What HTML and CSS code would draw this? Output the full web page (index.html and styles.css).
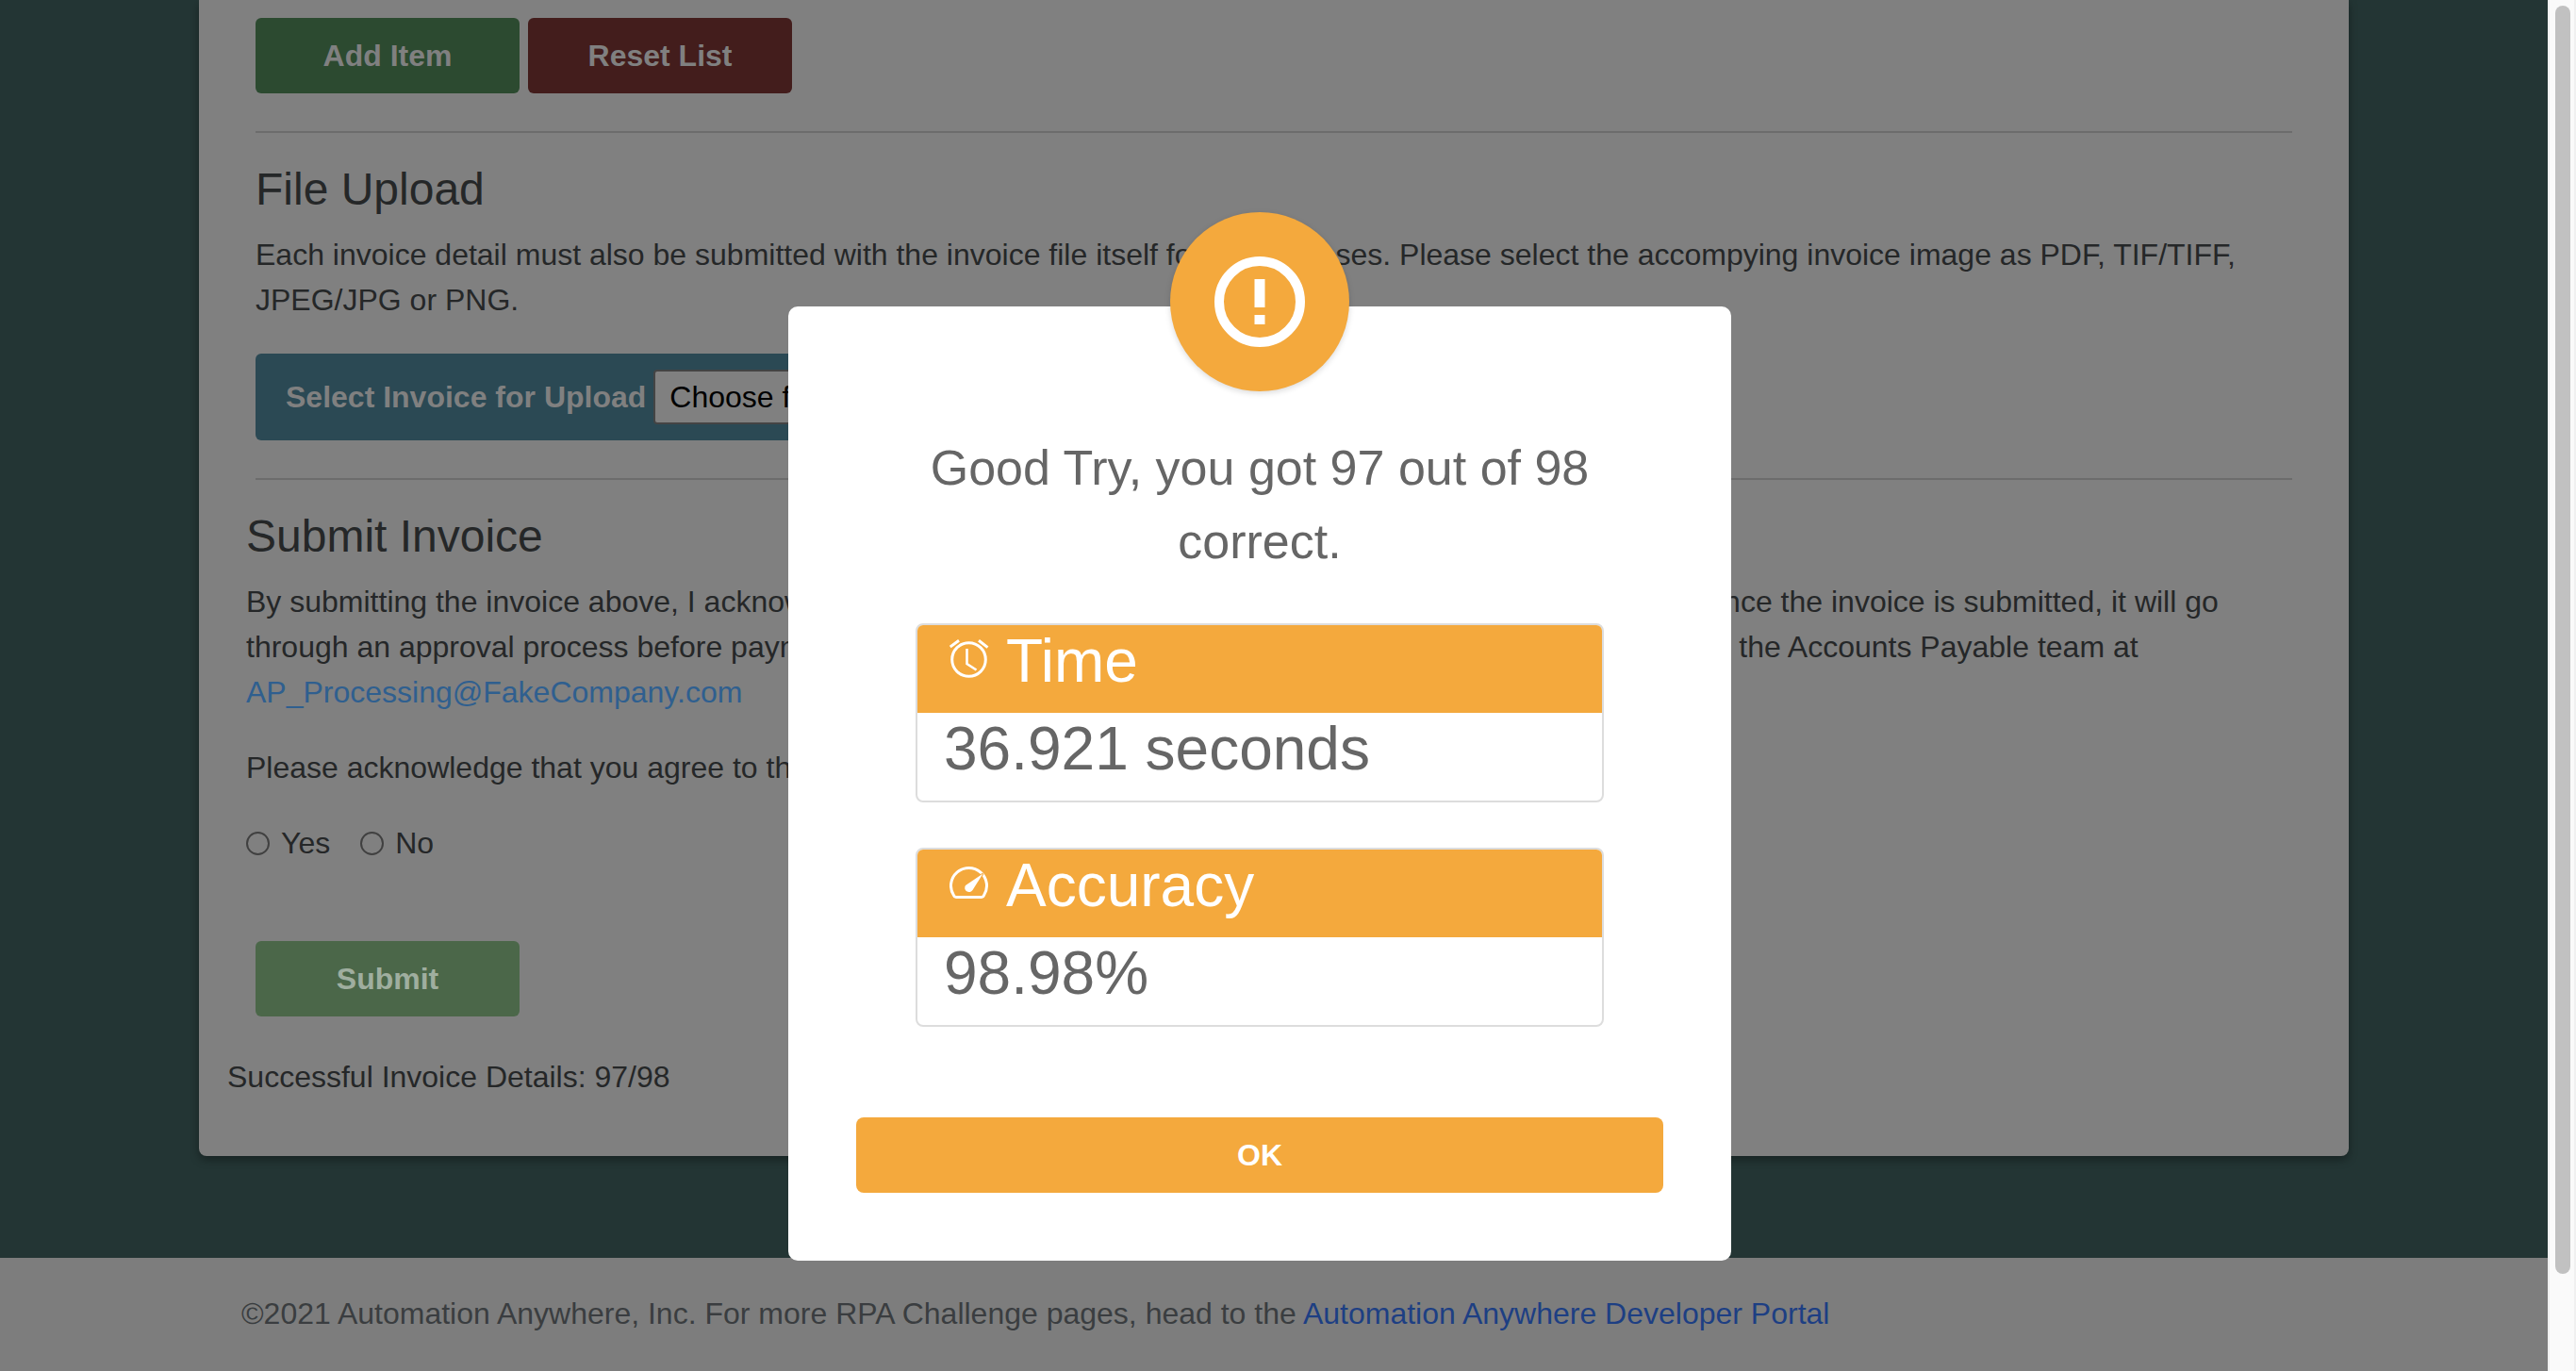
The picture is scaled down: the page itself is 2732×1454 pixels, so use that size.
FILE: index.html
```html
<!DOCTYPE html>
<html lang="en">
<head>
<meta charset="utf-8">
<title>Invoice Entry</title>
<link rel="stylesheet" href="styles.css">
</head>
<body>
<div class="app">
  <div class="page">
    <main class="main">
      <div class="card">
        <div class="block">
          <div class="btn-row">
            <button class="btn btn-add">Add Item</button>
            <button class="btn btn-reset">Reset List</button>
          </div>
          <hr class="rule rule-first">
          <h3 class="heading heading-upload">File Upload</h3>
          <p class="text">Each invoice detail must also be submitted with the invoice file itself for tax purposes. Please select the accompying invoice image as PDF, TIF/TIFF, JPEG/JPG or PNG.</p>
          <div class="upload">
            <span class="upload-label">Select Invoice for Upload</span>
            <button class="file-btn">Choose file</button>
          </div>
          <hr class="rule rule-second">
        </div>
        <div class="block-submit">
          <h3 class="heading heading-submit">Submit Invoice</h3>
          <p class="text text-terms">By submitting the invoice above, I acknowledge that all the details are accurate to the best of my knowledge. Once the invoice is submitted, it will go through an approval process before payment can be released to you. If you have any questions, please contact the Accounts Payable team at <a class="mail" href="#">AP_Processing@FakeCompany.com</a></p>
          <p class="text text-ack">Please acknowledge that you agree to the terms above.</p>
          <div class="radios">
            <label class="radio-item"><input class="radio" type="radio" name="ack">Yes</label>
            <label class="radio-item"><input class="radio" type="radio" name="ack">No</label>
          </div>
          <button class="btn btn-submit">Submit</button>
        </div>
        <p class="text result">Successful Invoice Details: 97/98</p>
      </div>
    </main>
    <footer class="footer">©2021 Automation Anywhere, Inc. For more RPA Challenge pages, head to the <a class="footer-link" href="#">Automation Anywhere Developer Portal</a></footer>

    <div class="modal">
      <div class="modal-icon">
        <svg class="alert-svg" width="96" height="96" viewBox="0 0 96 96">
          <circle cx="48" cy="48" r="43" fill="none" stroke="#fff" stroke-width="10"/>
          <rect x="42.5" y="24" width="11" height="30" fill="#fff"/>
          <rect x="42.5" y="62" width="11" height="10" fill="#fff"/>
        </svg>
      </div>
      <h2 class="modal-title">Good Try, you got 97 out of 98 correct.</h2>
      <section class="stat stat-first">
        <div class="stat-head">
          <svg class="stat-icon" width="42" height="42" viewBox="0 0 42 42" fill="none" stroke="#fff" stroke-width="3">
            <circle cx="20.5" cy="22.5" r="17.8"/>
            <path d="M0.7 9 L10 2.2 M31 2.2 L40.5 9.6"/>
            <path d="M18.5 11 V27 L28.5 33.5" stroke-width="2.6" stroke-linejoin="miter"/>
          </svg>
          <span>Time</span>
        </div>
        <div class="stat-body">36.921 seconds</div>
      </section>
      <section class="stat">
        <div class="stat-head">
          <svg class="stat-icon" width="42" height="42" viewBox="0 0 42 42" fill="none" stroke="#fff" stroke-width="3">
            <path d="M7 36.5 H34 A2.5 2.5 0 0 0 36.4 34.8 A19 19 0 1 0 4.6 34.8 A2.5 2.5 0 0 0 7 36.5 Z"/>
            <path d="M35.5 11.5 L24.5 29 A4.2 4.2 0 0 1 17 24 Z" fill="#fff" stroke="#f4a93d" stroke-width="2" paint-order="stroke"/>
          </svg>
          <span>Accuracy</span>
        </div>
        <div class="stat-body">98.98%</div>
      </section>
      <button class="btn ok-btn">OK</button>
    </div>
  </div>
  <aside class="scrollbar"><div class="thumb"></div></aside>
</div>
</body>
</html>
```

FILE: styles.css
```css
* { box-sizing: border-box; }
html, body { margin: 0; height: 100%; overflow: hidden; }
body { font-family: "Liberation Sans", Arial, sans-serif; font-size: 32px; line-height: 48px; color: #252728; background: #233534; }

.app { display: flex; width: 2732px; height: 1454px; }
.page { position: relative; flex: 1; display: flex; flex-direction: column; background: #233534; overflow: hidden; }
.main { flex: 1; }

.card { width: 2280px; margin: 0 auto; padding: 19px 60px 60px 30px; background: #808080; border-radius: 0 0 8px 8px; box-shadow: 0 4px 10px rgba(0,0,0,.35); }
.block { margin-left: 30px; }
.block-submit { margin-left: 20px; }

.btn-row { display: flex; gap: 9px; }
.btn { display: block; width: 280px; height: 80px; padding: 0; border: 0; border-radius: 6px; font: bold 32px/48px "Liberation Sans", Arial, sans-serif; color: #808080; text-align: center; }
.btn-add { background: #2c4a30; }
.btn-reset { background: #431d1c; }
.btn-submit { margin: 80px 0 0 10px; background: #4b6749; color: #9fae9f; }

.rule { margin: 0; border: 0; height: 2px; background: #6c6c6c; }
.rule-first { margin-top: 40px; }
.rule-second { margin-top: 40px; }

.heading { margin: 0; font-size: 48px; line-height: 57.6px; font-weight: 400; color: #252728; }
.heading-upload { margin-top: 31px; }
.heading-submit { margin-top: 31px; }

.text { margin: 16px 0 0; }
.text-terms { margin-top: 17px; }
.text-ack { margin-top: 32px; }
.result { margin-top: 40px; }
.mail { color: #2f5f8f; text-decoration: none; }

.upload { display: flex; align-items: center; gap: 8px; width: 900px; height: 92px; margin-top: 33px; padding-left: 32px; background: #2b4954; border-radius: 6px; }
.upload-label { font-weight: 700; color: #808080; }
.file-btn { height: 58px; width: 200px; padding: 0 0 0 15px; text-align: left; font: 32px/48px "Liberation Sans", Arial, sans-serif; color: #000; background: #808080; border: 2px solid #444; border-radius: 4px; }

.radios { display: flex; gap: 32px; margin-top: 32px; }
.radio-item { display: flex; align-items: center; gap: 12px; }
.radio { appearance: none; width: 25px; height: 25px; margin: 0; background: #808080; border: 2px solid #404040; border-radius: 50%; }

.footer { height: 120px; padding: 35px 0 0 256px; background: #7d7d7d; color: #3a3d40; }
.footer-link { color: #1d3f83; text-decoration: none; }

.modal { position: absolute; left: 836px; top: 325px; z-index: 10; width: 1000px; height: 1012px; padding: 132px 72px 72px; background: #fff; border-radius: 10px; display: flex; flex-direction: column; align-items: center; }
.modal-icon { position: absolute; left: 405px; top: -100px; width: 190px; height: 190px; display: flex; align-items: center; justify-content: center; background: #f4a93d; border-radius: 50%; box-shadow: 0 2px 6px rgba(0,0,0,.15); }
.alert-svg { display: block; }
.modal-title { width: 730px; margin: 0 0 48px; font-size: 52px; line-height: 78px; font-weight: 400; text-align: center; color: #666; }

.stat { width: 730px; height: 190px; border: 2px solid #ddd; border-radius: 8px; overflow: hidden; }
.stat-first { margin-bottom: 48px; }
.stat-head { display: flex; align-items: flex-start; gap: 18px; height: 93px; padding-left: 34px; background: #f4a93d; color: #fff; font-size: 64px; line-height: 76px; }
.stat-icon { flex: none; margin-top: 14px; }
.stat-body { height: 93px; padding-left: 28px; font-size: 64px; line-height: 76px; color: #666; }

.ok-btn { width: 856px; margin-top: 96px; background: #f4a93d; color: #fff; border-radius: 8px; }

.scrollbar { flex: none; width: 30px; height: 1454px; padding: 6px 0 0 6px; background: #fafafa; border-left: 2px solid #f0f0f0; border-right: 2px solid #f0f0f0; }
.thumb { width: 16px; height: 1345px; background: #c1c1c1; border-radius: 8px; }
```
